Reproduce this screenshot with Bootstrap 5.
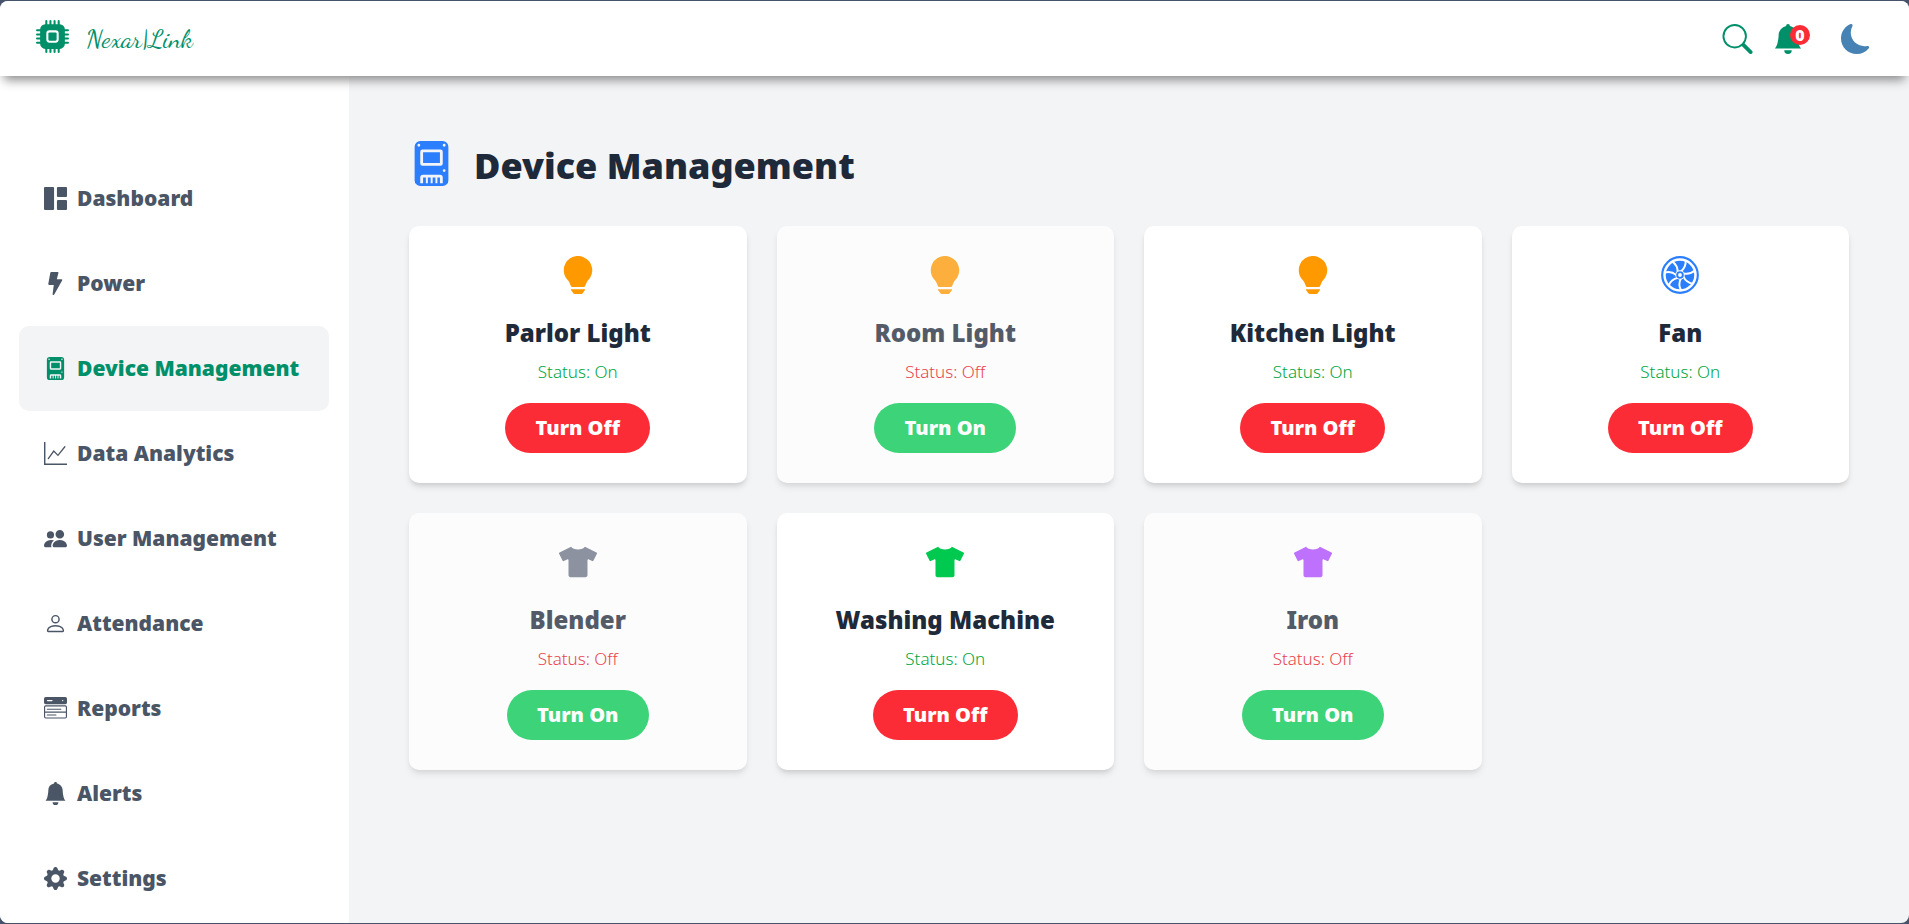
<!DOCTYPE html>
<html lang="en">
<head>
<meta charset="utf-8">
<meta name="viewport" content="width=device-width, initial-scale=1">
<title>Nexar|Link - Device Management</title>
<link rel="stylesheet" href="https://cdn.jsdelivr.net/npm/bootstrap@5.3.0/dist/css/bootstrap.min.css">
<style>
  :root { --brand: #009069; --ink: #1e2939; --slate: #4a5565; --canvas: #f3f4f6; }
  body { background: #46536b; font-family: "Noto Sans", "Open Sans", sans-serif; padding: 1px 0; }
  .app-shell { min-height: calc(100vh - 2px); background: var(--canvas); border-radius: 8px; overflow: hidden; }
  .topbar { height: 75px; padding: 0 38px 0 36px; background: #fff; box-shadow: 0 8px 10px -4px #8a8a8a; z-index: 2; }
  .brand-link { color: var(--brand); gap: 17px; }
  .brand-link svg { margin-bottom: 4px; }
  .brand-name { font-family: "Dancing Script", cursive; font-size: 26px; line-height: 30px; }
  .tools { gap: 20px; }
  .tool-btn { color: var(--brand); line-height: 0; padding: 0; border: 0; background: none; }
  .theme-btn { margin-left: 18px; }
  .count-dot { width: 20px; height: 20px; left: 17px; top: 1px; background: #fb2c36; color: #fff; font-size: 16px; font-weight: 900; line-height: 20px; border-radius: 50%; }
  .side { width: 349px; background: #fff; padding: 80px 20px 0 19px; }
  .side-link { height: 85px; padding-left: 25px; gap: 10px; border-radius: 10px; color: var(--slate); font-size: 21px; font-weight: 900; }
  .side-link.active { background: var(--canvas); color: var(--brand); }
  .content { padding: 60px; }
  .page-title { font-size: 36px; line-height: 54px; font-weight: 900; color: var(--ink); gap: 20px; margin-bottom: 36px; }
  .page-title span { line-height: 48px; padding-top: 6px; }
  .device-grid { display: grid; grid-template-columns: repeat(auto-fill, minmax(300px, 1fr)); gap: 30px; }
  .device { background: #fff; border-radius: 10px; padding: 30px; box-shadow: 0 5px 7px -1px rgba(0,0,0,.1), 0 3px 5px -2px rgba(0,0,0,.1); }
  .device.off { opacity: .75; }
  .device h2 { font-size: 24px; line-height: 34px; font-weight: 900; color: var(--ink); margin: 22px 0 9px; }
  .device p { font-size: 17px; line-height: 26px; font-weight: 350; margin-bottom: 18px; color: #00a63e; }
  .device.off p { color: #e7000b; }
  .toggle { height: 50px; padding: 0 30px; border: 0; border-radius: 25px; background: #fb2c36; color: #fff; font-size: 20px; font-weight: 900; }
  .off .toggle { background: #00c950; }
  .c-amber { color: #ff9900; } .c-blue { color: #2b7fff; } .c-gray { color: #6a7282; } .c-green { color: #00c950; } .c-purple { color: #ad46ff; }
</style>
</head>
<body>
<svg class="d-none" xmlns="http://www.w3.org/2000/svg">
  <symbol id="i-cpu" viewBox="0 0 16 16"><path d="M6.5 6a.5.5 0 0 0-.5.5v3a.5.5 0 0 0 .5.5h3a.5.5 0 0 0 .5-.5v-3a.5.5 0 0 0-.5-.5z"/><path d="M5.500.5a.5.5 0 0 0-1 0V2A2.500 2.500 0 0 0 2 4.500H.5a.5.5 0 0 0 0 1H2v1H.5a.5.5 0 0 0 0 1H2v1H.5a.5.5 0 0 0 0 1H2v1H.5a.5.5 0 0 0 0 1H2A2.500 2.500 0 0 0 4.500 14v1.500a.5.5 0 0 0 1 0V14h1v1.500a.5.5 0 0 0 1 0V14h1v1.500a.5.5 0 0 0 1 0V14h1v1.500a.5.5 0 0 0 1 0V14a2.500 2.500 0 0 0 2.500-2.500h1.500a.5.5 0 0 0 0-1H14v-1h1.500a.5.5 0 0 0 0-1H14v-1h1.500a.5.5 0 0 0 0-1H14v-1h1.500a.5.5 0 0 0 0-1H14A2.500 2.500 0 0 0 11.500 2V.5a.5.5 0 0 0-1 0V2h-1V.5a.5.5 0 0 0-1 0V2h-1V.5a.5.5 0 0 0-1 0V2h-1zm1 4.500h3A1.500 1.500 0 0 1 11 6.500v3A1.500 1.500 0 0 1 9.500 11h-3A1.500 1.500 0 0 1 5 9.500v-3A1.500 1.500 0 0 1 6.500 5"/></symbol>
  <symbol id="i-search" viewBox="0 0 16 16"><path d="M11.742 10.344a6.500 6.500 0 1 0-1.397 1.398h-.001q.044.060.098.115l3.850 3.850a1 1 0 0 0 1.415-1.414l-3.850-3.850a1 1 0 0 0-.115-.100zM12 6.500a5.500 5.500 0 1 1-11 0 5.500 5.500 0 0 1 11 0"/></symbol>
  <symbol id="i-bell" viewBox="0 0 16 16"><path d="M8 16a2 2 0 0 0 2-2H6a2 2 0 0 0 2 2m.995-14.901a1 1 0 1 0-1.990 0A5 5 0 0 0 3 6c0 1.098-.5 6-2 7h14c-1.500-1-2-5.902-2-7 0-2.420-1.720-4.440-4.005-4.901"/></symbol>
  <symbol id="i-moon" viewBox="0 0 16 16"><path d="M6 .278a.77.77 0 0 1 .08.858 7.200 7.200 0 0 0-.878 3.460c0 4.021 3.278 7.277 7.318 7.277q.792-.001 1.533-.160a.79.79 0 0 1 .81.316.73.73 0 0 1-.031.893A8.350 8.350 0 0 1 8.344 16C3.734 16 0 12.286 0 7.710 0 4.266 2.114 1.312 5.124.060A.75.75 0 0 1 6 .278"/></symbol>
  <symbol id="i-dash" viewBox="0 0 16 16"><rect width="7" height="16" rx=".7"/><rect x="9" width="7" height="7" rx=".7"/><rect x="9" y="9" width="7" height="7" rx=".7"/></symbol>
  <symbol id="i-bolt" viewBox="0 0 16 16"><path d="M4.400.6A.7.7 0 0 1 5.100 0h4.200a.7.7 0 0 1 .7.900L8.900 5h3.200a.6.6 0 0 1 .5.900L7.100 15.700a.6.600 0 0 1-1.100-.400L6.800 9H3.700a.7.7 0 0 1-.7-.800z"/></symbol>
  <symbol id="i-device" viewBox="0 0 16 16"><path fill-rule="evenodd" d="M4 0h8a2 2 0 0 1 2 2v12a2 2 0 0 1-2 2H4a2 2 0 0 1-2-2V2a2 2 0 0 1 2-2zm0 1.500a.5.5 0 1 1-1 0 .5.5 0 0 1 1 0zm9 0a.5.5 0 1 1-1 0 .5.5 0 0 1 1 0zM4.800 3A.8.8 0 0 0 4 3.800V8a.8.8 0 0 0 .8.8h6.400A.8.800 0 0 0 12 8V3.800a.8.800 0 0 0-.8-.8zM5 4h6v3.800H5zm8 6.500a.5.5 0 1 1-1 0 .5.5 0 0 1 1 0zM5 12a1 1 0 0 0-1 1v2h1v-2h1v2h.7v-2h1v2h.7v-2h1v2h.7v-2H11v2h1v-2a1 1 0 0 0-1-1z"/></symbol>
  <symbol id="i-chart" viewBox="0 0 16 16"><path fill-rule="evenodd" d="M0 0h1v15h15v1H0z"/><path d="m3 11.600 3.800-5.300 2.900 3 4.800-6" fill="none" stroke="currentColor" stroke-width=".9" stroke-linecap="round"/></symbol>
  <symbol id="i-people" viewBox="0 0 16 16"><path d="M7 14s-1 0-1-1 1-4 5-4 5 3 5 4-1 1-1 1zm4-6a3 3 0 1 0 0-6 3 3 0 0 0 0 6m-5.784 6A2.240 2.240 0 0 1 5 13c0-1.355.68-2.750 1.936-3.720A6.300 6.300 0 0 0 5 9c-4 0-5 3-5 4s1 1 1 1zM4.500 8a2.500 2.500 0 1 0 0-5 2.500 2.500 0 0 0 0 5"/></symbol>
  <symbol id="i-person" viewBox="0 0 16 16"><path d="M8 8a3 3 0 1 0 0-6 3 3 0 0 0 0 6m2-3a2 2 0 1 1-4 0 2 2 0 0 1 4 0m4 8c0 1-1 1-1 1H3s-1 0-1-1 1-4 6-4 6 3 6 4m-1-.004c-.001-.246-.154-.986-.832-1.664C11.516 10.680 10.289 10 8 10s-3.516.680-4.168 1.332c-.678.678-.830 1.418-.832 1.664z"/></symbol>
  <symbol id="i-report" viewBox="0 0 16 16"><path fill-rule="evenodd" d="M1.200 0h13.600A1.200 1.200 0 0 1 16 1.200v2.600A1.200 1.200 0 0 1 14.800 5H1.200A1.200 1.200 0 0 1 0 3.800V1.200A1.200 1.200 0 0 1 1.200 0zM2.500 2a.5.5 0 0 0 0 1h3a.5.5 0 0 0 0-1zM13 2a.5.5 0 1 0 0 1 .5.5 0 0 0 0-1z"/><path d="M1.200 6.200h13.600a.8.800 0 0 1 .8.800v6.800a.8.800 0 0 1-.8.800H1.200a.8.800 0 0 1-.8-.8V7a.8.800 0 0 1 .8-.8zM.4 10.500h15.200M2.300 8.500h9.400M2.300 12.500h6" fill="none" stroke="currentColor" stroke-width=".8" stroke-linecap="round"/></symbol>
  <symbol id="i-gear" viewBox="0 0 16 16"><path d="M9.405 1.050c-.413-1.400-2.397-1.400-2.810 0l-.1.340a1.464 1.464 0 0 1-2.105.872l-.31-.170c-1.283-.698-2.686.705-1.987 1.987l.169.311c.446.820.023 1.841-.872 2.105l-.340.100c-1.400.413-1.400 2.397 0 2.810l.340.100a1.464 1.464 0 0 1 .872 2.105l-.170.310c-.698 1.283.705 2.686 1.987 1.987l.311-.169a1.464 1.464 0 0 1 2.105.872l.100.340c.413 1.400 2.397 1.400 2.810 0l.100-.340a1.464 1.464 0 0 1 2.105-.872l.310.170c1.283.698 2.686-.705 1.987-1.987l-.169-.311a1.464 1.464 0 0 1 .872-2.105l.340-.100c1.400-.413 1.400-2.397 0-2.810l-.340-.100a1.464 1.464 0 0 1-.872-2.105l.170-.310c.698-1.283-.705-2.686-1.987-1.987l-.311.169a1.464 1.464 0 0 1-2.105-.872zM8 10.930a2.929 2.929 0 1 1 0-5.860 2.929 2.929 0 0 1 0 5.858z"/></symbol>
  <symbol id="i-bulb" viewBox="0 0 16 16"><path d="M2 6a6 6 0 1 1 10.174 4.310c-.203.196-.359.400-.453.619l-.762 1.769A.5.500 0 0 1 10.500 13h-5a.5.500 0 0 1-.460-.302l-.761-1.770a2 2 0 0 0-.453-.618A5.980 5.980 0 0 1 2 6m3 8h6a.7.700 0 0 1-.2.500l-.850 1.200a.8.800 0 0 1-.7.300h-2.500a.8.800 0 0 1-.7-.3l-.850-1.200A.7.700 0 0 1 5 14"/></symbol>
  <symbol id="i-fan" viewBox="-8 -8 16 16"><circle r="7.500" fill="none" stroke="currentColor" stroke-width=".9"/><circle r="6"/><g fill="none" stroke="#fff" stroke-width=".8"><path id="spoke" d="M.3-1.500Q2.600-3.200 2.400-6.200"/><use href="#spoke" transform="rotate(51.430)"/><use href="#spoke" transform="rotate(102.860)"/><use href="#spoke" transform="rotate(154.290)"/><use href="#spoke" transform="rotate(205.710)"/><use href="#spoke" transform="rotate(257.140)"/><use href="#spoke" transform="rotate(308.570)"/></g><circle r="2" fill="#fff"/><circle r="1.200" fill="none" stroke="currentColor" stroke-width=".8"/></symbol>
  <symbol id="i-shirt" viewBox="0 0 640 512"><path d="M631.200 96.500 436.500 0C416.400 27.800 371.900 47.200 320 47.200S223.600 27.800 203.500 0L8.800 96.500c-7.900 4-11.100 13.600-7.200 21.500l57.200 114.500c4 7.900 13.600 11.100 21.500 7.200l56.600-27.700c10.600-5.200 23 2.500 23 14.400V480c0 17.700 14.300 32 32 32h256c17.700 0 32-14.300 32-32V226.300c0-11.800 12.400-19.600 23-14.400l56.600 27.700c7.900 4 17.500.8 21.500-7.200L638.300 118c4-7.900.8-17.600-7.100-21.500z"/></symbol>
</svg>

<div class="app-shell d-flex flex-column">
  <header class="topbar d-flex align-items-center justify-content-between position-relative">
    <a class="brand-link d-flex align-items-center text-decoration-none" href="#">
      <svg width="33" height="33" fill="currentColor" aria-hidden="true"><use href="#i-cpu"/></svg>
      <span class="brand-name">Nexar|Link</span>
    </a>
    <div class="tools d-flex align-items-center">
      <button class="tool-btn" type="button" aria-label="Search"><svg width="31" height="30" fill="currentColor"><use href="#i-search"/></svg></button>
      <button class="tool-btn position-relative" type="button" aria-label="Notifications"><svg width="30" height="30" fill="currentColor"><use href="#i-bell"/></svg><span class="count-dot position-absolute text-center">0</span></button>
      <button class="tool-btn theme-btn" type="button" aria-label="Dark mode"><svg width="30" height="30" fill="#4682b4"><use href="#i-moon"/></svg></button>
    </div>
  </header>

  <div class="d-flex flex-grow-1">
    <nav class="side flex-shrink-0 d-flex flex-column" aria-label="Main">
      <a class="side-link d-flex align-items-center text-decoration-none" href="#"><svg width="23" height="23" fill="currentColor"><use href="#i-dash"/></svg>Dashboard</a>
      <a class="side-link d-flex align-items-center text-decoration-none" href="#"><svg width="23" height="23" fill="currentColor"><use href="#i-bolt"/></svg>Power</a>
      <a class="side-link active d-flex align-items-center text-decoration-none" href="#" aria-current="page"><svg width="23" height="23" fill="currentColor"><use href="#i-device"/></svg>Device Management</a>
      <a class="side-link d-flex align-items-center text-decoration-none" href="#"><svg width="23" height="23" fill="currentColor"><use href="#i-chart"/></svg>Data Analytics</a>
      <a class="side-link d-flex align-items-center text-decoration-none" href="#"><svg width="23" height="23" fill="currentColor"><use href="#i-people"/></svg>User Management</a>
      <a class="side-link d-flex align-items-center text-decoration-none" href="#"><svg width="23" height="23" fill="currentColor"><use href="#i-person"/></svg>Attendance</a>
      <a class="side-link d-flex align-items-center text-decoration-none" href="#"><svg width="23" height="23" fill="currentColor"><use href="#i-report"/></svg>Reports</a>
      <a class="side-link d-flex align-items-center text-decoration-none" href="#"><svg width="23" height="23" fill="currentColor"><use href="#i-bell"/></svg>Alerts</a>
      <a class="side-link d-flex align-items-center text-decoration-none" href="#"><svg width="23" height="23" fill="currentColor"><use href="#i-gear"/></svg>Settings</a>
    </nav>

    <main class="content flex-grow-1">
      <h1 class="page-title d-flex align-items-center"><svg class="c-blue" width="45" height="45" fill="currentColor" aria-hidden="true"><use href="#i-device"/></svg><span>Device Management</span></h1>
      <div class="device-grid">
        <section class="device text-center">
          <svg class="c-amber d-block mx-auto" width="38" height="38" fill="currentColor"><use href="#i-bulb"/></svg>
          <h2>Parlor Light</h2><p>Status: On</p><button class="toggle" type="button">Turn Off</button>
        </section>
        <section class="device off text-center">
          <svg class="c-amber d-block mx-auto" width="38" height="38" fill="currentColor"><use href="#i-bulb"/></svg>
          <h2>Room Light</h2><p>Status: Off</p><button class="toggle" type="button">Turn On</button>
        </section>
        <section class="device text-center">
          <svg class="c-amber d-block mx-auto" width="38" height="38" fill="currentColor"><use href="#i-bulb"/></svg>
          <h2>Kitchen Light</h2><p>Status: On</p><button class="toggle" type="button">Turn Off</button>
        </section>
        <section class="device text-center">
          <svg class="c-blue d-block mx-auto" width="38" height="38" fill="currentColor"><use href="#i-fan"/></svg>
          <h2>Fan</h2><p>Status: On</p><button class="toggle" type="button">Turn Off</button>
        </section>
        <section class="device off text-center">
          <svg class="c-gray d-block mx-auto" width="38" height="38" fill="currentColor"><use href="#i-shirt"/></svg>
          <h2>Blender</h2><p>Status: Off</p><button class="toggle" type="button">Turn On</button>
        </section>
        <section class="device text-center">
          <svg class="c-green d-block mx-auto" width="38" height="38" fill="currentColor"><use href="#i-shirt"/></svg>
          <h2>Washing Machine</h2><p>Status: On</p><button class="toggle" type="button">Turn Off</button>
        </section>
        <section class="device off text-center">
          <svg class="c-purple d-block mx-auto" width="38" height="38" fill="currentColor"><use href="#i-shirt"/></svg>
          <h2>Iron</h2><p>Status: Off</p><button class="toggle" type="button">Turn On</button>
        </section>
      </div>
    </main>
  </div>
</div>
<script src="https://cdn.jsdelivr.net/npm/bootstrap@5.3.0/dist/js/bootstrap.bundle.min.js"></script>
</body>
</html>
